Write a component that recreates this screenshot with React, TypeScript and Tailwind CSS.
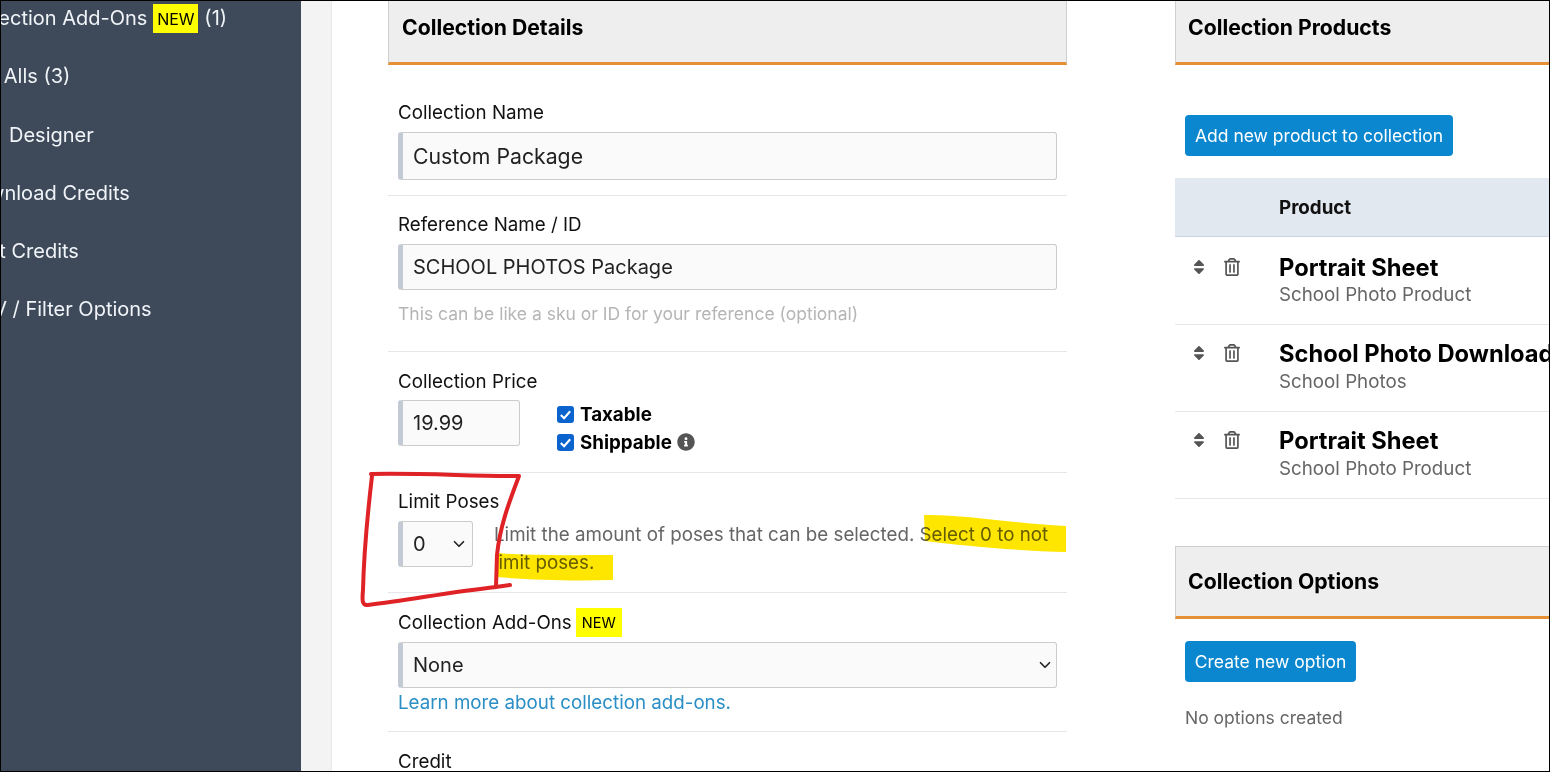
import { ChevronDown } from 'lucide-react'
import { FaInfoCircle, FaRegTrashAlt, FaSort } from 'react-icons/fa'

const navItems = [
  { label: 'Collection Add-Ons', badge: true, count: '(1)' },
  { label: 'Buy Alls (3)' },
  { label: 'Designer', indent: 'pl-[47px]' },
  { label: 'Download Credits' },
  { label: 'Print Credits' },
  { label: 'BMV / Filter Options' },
]

const products = [
  { name: 'Portrait Sheet', type: 'School Photo Product' },
  { name: 'School Photo Download', type: 'School Photos' },
  { name: 'Portrait Sheet', type: 'School Photo Product' },
]

function NewBadge({ className }: { className: string }) {
  return <span className={`inline-flex items-center justify-center bg-[#ffff00] text-black ${className}`}>NEW</span>
}

function CardHeader({ title, className }: { title: string; className: string }) {
  return (
    <div className={`flex items-center border-x border-[#cfcfcf] border-b-[3px] border-b-[#e59035] bg-[#eeeeee] text-[21.2px] font-bold text-black ${className}`}>
      {title}
    </div>
  )
}

function Field({ value, className }: { value: string; className: string }) {
  return (
    <input
      readOnly
      value={value}
      className={`block rounded-[3px] border border-[#cccccc] border-l-[5px] border-l-[#c3cad4] bg-[#fafafa] pl-[10px] text-[#222] outline-none ${className}`}
    />
  )
}

function SelectBox({ value, className }: { value: string; className: string }) {
  return (
    <div className={`flex items-center justify-between rounded-[3px] border border-[#cccccc] border-l-[5px] border-l-[#c3cad4] bg-[#fafafa] pl-[10px] text-[20px] text-[#222] ${className}`}>
      <span>{value}</span>
      <ChevronDown size={18} strokeWidth={2.2} />
    </div>
  )
}

function Checkbox({ label, info }: { label: string; info?: boolean }) {
  return (
    <div className="flex h-[28px] items-center gap-[6px] text-[18.75px] font-bold text-black">
      <span className="flex h-[17px] w-[17px] items-center justify-center rounded-[3px] bg-[#0b63ce]">
        <svg viewBox="0 0 16 16" className="h-[15px] w-[15px]" fill="none" stroke="white" strokeWidth="2.2">
          <path d="M3 8.5 6.5 12 13 4.5" />
        </svg>
      </span>
      <span className="pt-[2px]">{label}</span>
      {info && <FaInfoCircle className="ml-[-1px] text-[18px] text-[#555]" />}
    </div>
  )
}

export default function App() {
  return (
    <div className="relative flex h-[772px] w-[1550px] overflow-hidden border border-black bg-white font-['Inter',sans-serif] text-[18.75px] text-[#111]">
      {/* sidebar, scrolled off to the left in the capture */}
      <div className="w-[300px] shrink-0 overflow-hidden bg-[#3e4a5a] pt-[3px] text-[20px] text-[#f1f4f8]">
        {navItems.map((item) => (
          <div key={item.label} className={`ml-[-39px] flex h-[58.25px] gap-[6px] whitespace-nowrap ${item.indent ?? ''}`}>
            <span className="leading-[29px]">{item.label}</span>
            {item.badge && <NewBadge className="h-[29px] w-[45px] text-[16px]" />}
            {item.count && <span className="leading-[29px]">{item.count}</span>}
          </div>
        ))}
      </div>
      <div className="w-[31px] shrink-0 border-r border-[#e5e7eb] bg-[#f3f3f3]" />

      <div className="flex min-w-0 flex-1 gap-[108px] pl-[56px]">
        <div className="w-[679px] shrink-0">
          <CardHeader title="Collection Details" className="h-[64px] pb-[7px] pl-[13px]" />

          <div className="border-b border-[#e5e7eb] px-[10px] pb-[15px] pt-[34px]">
            <div className="mb-[6px] leading-[27px]">Collection Name</div>
            <Field value="Custom Package" className="h-[48px] w-[659px] text-[21.25px]" />
          </div>

          <div className="h-[156px] border-b border-[#e5e7eb] px-[10px] pt-[15px]">
            <div className="mb-[6px] leading-[27px]">Reference Name / ID</div>
            <Field value="SCHOOL PHOTOS Package" className="h-[46px] w-[659px] text-[20px]" />
            <div className="mt-[11px] text-[17.5px] text-[#b5b5b5]">This can be like a sku or ID for your reference (optional)</div>
          </div>

          <div className="h-[121px] border-b border-[#e5e7eb] px-[10px] pt-[16px]">
            <div className="mb-[5px] leading-[27px]">Collection Price</div>
            <div className="flex gap-[37px]">
              <Field value="19.99" className="h-[46px] w-[122px] text-[20px]" />
              <div>
                <Checkbox label="Taxable" />
                <Checkbox label="Shippable" info />
              </div>
            </div>
          </div>

          <div className="h-[120px] border-b border-[#e5e7eb] px-[10px] pt-[15px]">
            <div className="mb-[6px] leading-[27px]">Limit Poses</div>
            <div className="flex gap-[21px]">
              <SelectBox value="0" className="h-[46px] w-[75px] shrink-0 pr-[4px]" />
              <p className="leading-[28px] text-[#666]">
                Limit the amount of poses that can be selected. Select 0 to not limit poses.
              </p>
            </div>
          </div>

          <div className="h-[139px] border-b border-[#e5e7eb] px-[10px] pt-[15px]">
            <div className="mb-[6px] mt-[1px] flex h-[27px] items-center gap-[4px]">
              <span className="pt-[2px]">Collection Add-Ons</span>
              <NewBadge className="h-[29px] w-[46px] text-[14.5px]" />
            </div>
            <SelectBox value="None" className="h-[46px] w-[659px] pr-[2px]" />
            <div className="mt-[1px] leading-[27px] text-[#2b8fc6]">Learn more about collection add-ons.</div>
          </div>

          <div className="px-[10px] pt-[16px] leading-[27px]">Credit</div>
        </div>

        <div className="min-w-0 flex-1 overflow-hidden">
          <CardHeader title="Collection Products" className="h-[64px] border-r-0 pb-[7px] pl-[12px]" />
          <button className="ml-[10px] mt-[50px] block h-[41px] w-[268px] rounded-[4px] bg-[#0a87cf] pt-[1px] text-[17.5px] text-white">
            Add new product to collection
          </button>

          <div className="mt-[22px] flex h-[59px] items-center border-b border-[#cbd5e1] bg-[#e2e8f0] pl-[104px] pt-[3px] font-bold">
            Product
          </div>
          {products.map((product, i) => (
            <div key={i} className={`flex border-b border-[#e5e7eb] ${i === 0 ? 'h-[88px] pt-[16px]' : 'h-[87px] pt-[14px]'}`}>
              <div className="flex h-[27px] w-[104px] shrink-0 items-center text-[#555]">
                <FaSort className="ml-[15px] text-[18px]" />
                <FaRegTrashAlt className="ml-[15px] text-[18px]" />
              </div>
              <div className="whitespace-nowrap">
                <div className="text-[23.7px] font-bold leading-[30px] text-black">{product.name}</div>
                <div className={`text-[#666] ${i === 0 ? 'leading-[23px]' : 'leading-[25px]'}`}>{product.type}</div>
              </div>
            </div>
          ))}

          <CardHeader title="Collection Options" className="mt-[47px] h-[73px] border-r-0 border-t border-t-[#cfcfcf] pl-[12px]" />
          <button className="ml-[10px] mt-[22px] block h-[41px] w-[171px] rounded-[4px] bg-[#0a87cf] pt-[1px] text-[17.5px] text-white">
            Create new option
          </button>
          <div className="ml-[10px] mt-[23px] text-[17.5px] text-[#666]">No options created</div>
        </div>
      </div>

      {/* marker annotations drawn on top of the screenshot */}
      <svg className="pointer-events-none absolute left-[-1px] top-[-1px] h-[772px] w-[1550px] mix-blend-multiply" viewBox="0 0 1550 772" fill="#ffe600">
        <path d="M924 515C960 514 1010 523 1066 526V552C1020 551 965 546 925 541Z" />
        <path d="M497 553C530 556 575 555 613 555V580C570 581 530 580 497 577Z" />
      </svg>
      <svg className="pointer-events-none absolute left-[-1px] top-[-1px] h-[772px] w-[1550px]" viewBox="0 0 1550 772" fill="none" stroke="#df2226" strokeWidth="4" strokeLinecap="round" strokeLinejoin="round">
        <path d="M371 474C420 473 470 476 519 476C510 500 500 525 497 555L496 587L510 585M496 587C450 592 410 600 368 605C362 606 362 600 363 590C364 550 368 510 372 476" />
      </svg>
    </div>
  )
}
